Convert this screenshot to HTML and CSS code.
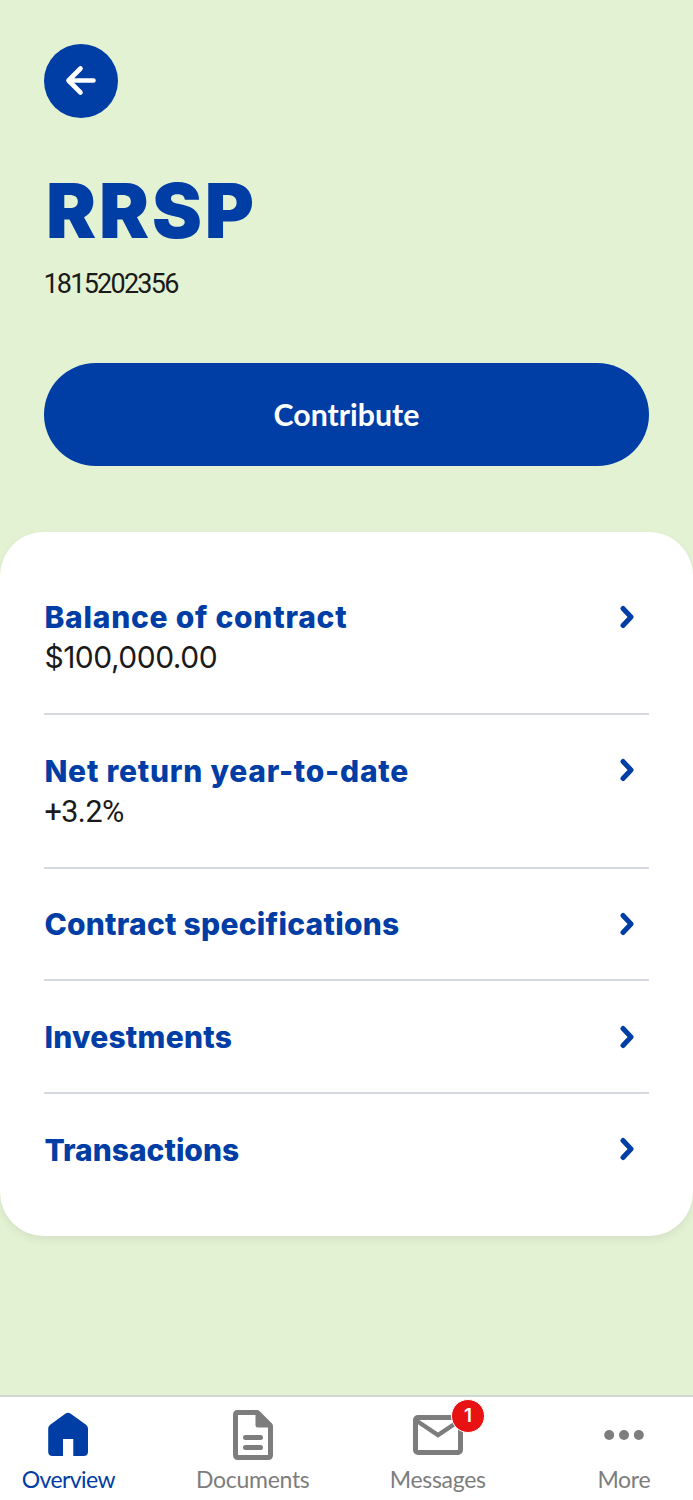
FILE: index.html
```html
<!DOCTYPE html>
<html lang="en">
<head>
    <meta charset="UTF-8">
    <meta name="viewport" content="width=device-width, initial-scale=1.0">
    <title>RRSP</title>
    <link rel="stylesheet" href="styles.css">
</head>
<body>
    <header class="header">
        <a href="#" class="back-button" aria-label="Back">
            <svg width="74" height="74" viewBox="0 0 74 74"><path d="M49.5 36.5H25M36.5 24.5L24.5 36.5L36.5 48.5"/></svg>
        </a>
        <h1>RRSP</h1>
        <p class="contract-number">1815202356</p>
        <a href="#" class="contribute">Contribute</a>
    </header>

    <main class="card">
        <a href="#" class="row">
            <div>
                <h2 class="wide">Balance of contract</h2>
                <p>$100,000.00</p>
            </div>
            <svg class="chevron" width="16" height="24" viewBox="0 0 16 24"><path d="M4 3.5L12 12L4 20.5"/></svg>
        </a>
        <a href="#" class="row">
            <div>
                <h2 class="wide">Net return year-to-date</h2>
                <p class="percent">+3.2%</p>
            </div>
            <svg class="chevron" width="16" height="24" viewBox="0 0 16 24"><path d="M4 3.5L12 12L4 20.5"/></svg>
        </a>
        <a href="#" class="row">
            <h2 class="medium">Contract specifications</h2>
            <svg class="chevron" width="16" height="24" viewBox="0 0 16 24"><path d="M4 3.5L12 12L4 20.5"/></svg>
        </a>
        <a href="#" class="row">
            <h2 class="medium">Investments</h2>
            <svg class="chevron" width="16" height="24" viewBox="0 0 16 24"><path d="M4 3.5L12 12L4 20.5"/></svg>
        </a>
        <a href="#" class="row">
            <h2>Transactions</h2>
            <svg class="chevron" width="16" height="24" viewBox="0 0 16 24"><path d="M4 3.5L12 12L4 20.5"/></svg>
        </a>
    </main>

    <nav class="tabs">
        <a href="#" class="tab active">
            <svg width="50" height="50" viewBox="0 0 50 50"><path fill="currentColor" d="M22.6 3.6Q25 2 27.4 3.6L43 14.7Q45 16.2 45 18.5V41.5Q45 46 40.5 46H30.3V29H20V46H9.7Q5.2 46 5.2 41.5V18.5Q5.2 16.2 7.2 14.7Z"/></svg>
            <span>Overview</span>
        </a>
        <a href="#" class="tab">
            <svg width="50" height="50" viewBox="0 0 50 50"><path fill="currentColor" fill-rule="evenodd" d="M9.5 0H29Q30.5 0 31.5 1L44 13.5Q45 14.5 45 16V45Q45 50 40 50H10Q5 50 5 45V5Q5 0 9.5 0ZM10 5V45H40V17.5H30Q27.5 17.5 27.5 15V5Z"/><path d="M17.5 27.5H32.5M17.5 37.5H32.5" stroke="currentColor" stroke-width="5" stroke-linecap="round"/></svg>
            <span>Documents</span>
        </a>
        <a href="#" class="tab messages">
            <svg width="50" height="50" viewBox="0 0 50 50"><rect x="2.5" y="7.5" width="45" height="35" rx="2.5" fill="none" stroke="currentColor" stroke-width="5"/><path d="M2.5 10L25 25L47.5 10" fill="none" stroke="currentColor" stroke-width="4.4"/></svg>
            <span class="badge">1</span>
            <span>Messages</span>
        </a>
        <a href="#" class="tab">
            <svg width="50" height="50" viewBox="0 0 50 50"><g fill="currentColor"><circle cx="10.2" cy="25" r="5"/><circle cx="25" cy="25" r="5"/><circle cx="39.8" cy="25" r="5"/></g></svg>
            <span>More</span>
        </a>
    </nav>
</body>
</html>
```
FILE: styles.css
```css
* {
    box-sizing: border-box;
}
body {
    display: flex;
    flex-direction: column;
    height: 1500px;
    margin: 0;
    overflow: hidden;
    background-color: #e4f2d4;
    color: #1a1a1a;
    font-family: Lato, sans-serif;
}
a {
    color: inherit;
    text-decoration: none;
}
h1, h2, p {
    margin: 0;
}
.header {
    padding: 44.4px 44.4px 0;
}
.back-button {
    display: block;
    width: 74px;
    height: 74px;
    border-radius: 50%;
    background-color: #003da5;
}
.back-button svg {
    display: block;
    fill: none;
    stroke: white;
    stroke-width: 4.6;
    stroke-linecap: round;
    stroke-linejoin: round;
}
h1 {
    margin-top: 48px;
    margin-left: 1.5px;
    color: #003da5;
    font-family: Inter, sans-serif;
    font-size: 75px;
    font-weight: 900;
    line-height: 90px;
    letter-spacing: 2.9px;
}
.contract-number {
    margin-top: 9.5px;
    margin-left: -1px;
    font-family: Roboto, sans-serif;
    font-size: 27px;
    line-height: 36px;
    letter-spacing: -1.75px;
}
.contribute {
    display: flex;
    align-items: center;
    justify-content: center;
    height: 103px;
    margin-top: 61px;
    border-radius: 52px;
    background-color: #003da5;
    color: white;
    font-size: 30.3px;
    font-weight: 700;
}
.card {
    margin-top: 66.5px;
    padding: 29.2px 44.4px;
    border-radius: 44px;
    background-color: white;
    box-shadow: 0 4px 8px rgba(0, 0, 0, 0.07);
}
.row {
    display: flex;
    justify-content: space-between;
    padding: 35.9px 14px 34.8px 0;
    border-bottom: 2px solid #d6dae0;
}
.row:last-child {
    border-bottom-color: transparent;
}
.row h2 {
    color: #003da5;
    font-family: Inter, sans-serif;
    font-size: 30px;
    font-weight: 800;
    line-height: 40px;
    white-space: nowrap;
}
.row h2.wide {
    letter-spacing: 0.76px;
}
.row h2.medium {
    letter-spacing: 0.25px;
}
.row p {
    padding-top: 1px;
    font-family: Inter, sans-serif;
    font-size: 30px;
    line-height: 39.8px;
    letter-spacing: -0.5px;
}
.row p.percent {
    font-family: Roboto, sans-serif;
    font-size: 30.5px;
}
.chevron {
    margin-top: 7.5px;
    fill: none;
    stroke: #003da5;
    stroke-width: 5;
    stroke-linecap: round;
    stroke-linejoin: round;
}
.tabs {
    display: grid;
    grid-template-columns: 184.4px 184.4px 184.4px 189px;
    height: 105px;
    margin-top: auto;
    margin-left: -23.8px;
    width: 742.2px;
    border-top: 2px solid #cfd8d3;
    background-color: white;
}
.tab {
    position: relative;
    display: flex;
    flex-direction: column;
    align-items: center;
    padding-top: 13.4px;
    color: #7d7d7d;
    font-size: 23px;
    line-height: 32px;
    letter-spacing: -0.3px;
}
.tab.active {
    color: #003da5;
    letter-spacing: -0.6px;
}
.tab svg {
    margin-bottom: 3px;
}
.messages {
    padding-left: 1px;
}
.badge {
    position: absolute;
    top: 2px;
    left: 106px;
    width: 34px;
    height: 34px;
    border: 1.5px solid white;
    border-radius: 50%;
    background-color: #e81212;
    color: white;
    font-family: Inter, sans-serif;
    font-size: 19px;
    font-weight: 600;
    line-height: 31px;
    text-align: center;
}
```
